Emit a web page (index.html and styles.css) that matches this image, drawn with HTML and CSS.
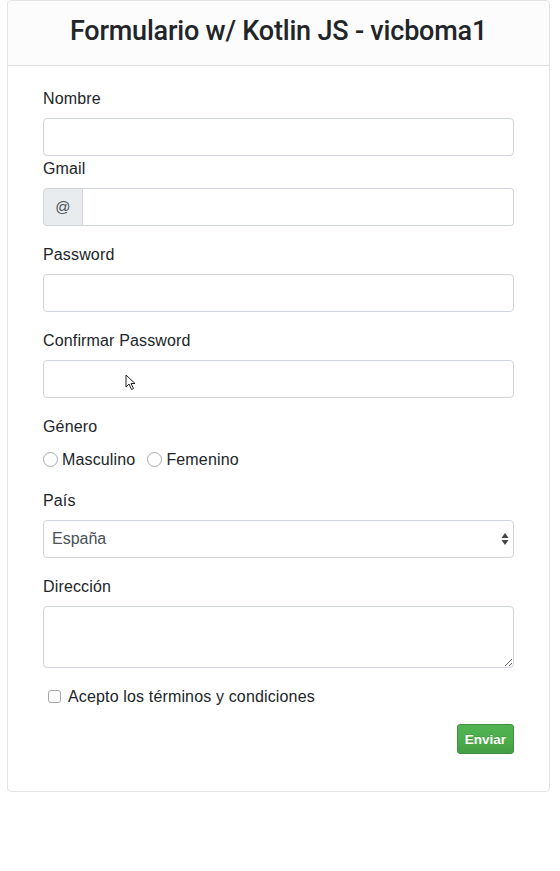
FILE: index.html
```html
<!DOCTYPE html>
<html lang="es">
<head>
<meta charset="utf-8">
<title>Formulario w/ Kotlin JS</title>
<link rel="stylesheet" href="styles.css">
</head>
<body>
<div class="card">
  <div class="card-header">
    <h3 class="title">Formulario w/ Kotlin JS - vicboma1</h3>
  </div>
  <div class="card-body">
    <form class="form">
      <div class="group group-tight">
        <label class="lbl" for="nombre">Nombre</label>
        <input class="control" id="nombre" type="text">
      </div>
      <div class="group">
        <label class="lbl" for="gmail">Gmail</label>
        <div class="input-group">
          <span class="prepend">@</span>
          <input class="control control-group" id="gmail" type="text">
        </div>
      </div>
      <div class="group">
        <label class="lbl" for="pass">Password</label>
        <input class="control" id="pass" type="password">
      </div>
      <div class="group">
        <label class="lbl" for="pass2">Confirmar Password</label>
        <div class="cursor-wrap">
          <input class="control" id="pass2" type="password">
          <svg class="cursor" width="12" height="17" viewBox="0 0 12 17"><path d="M1 1 L1 13 L4 10 L6.5 15.5 L8.5 14.5 L6 9.5 L10 9.5 Z" fill="#fff" stroke="#222" stroke-width="1"/></svg>
        </div>
      </div>
      <div class="group">
        <span class="lbl">Género</span>
        <div class="radios">
          <label class="radio"><input type="radio" name="genero"><span>Masculino</span></label>
          <label class="radio"><input type="radio" name="genero"><span>Femenino</span></label>
        </div>
      </div>
      <div class="group">
        <label class="lbl" for="pais">País</label>
        <div class="select-wrap">
          <select class="control select" id="pais">
            <option>España</option>
          </select>
          <svg class="select-arrows" width="8" height="14" viewBox="0 0 8 14"><path d="M4 1 L7.5 6 L0.5 6 Z M4 13 L7.5 8 L0.5 8 Z" fill="#444"/></svg>
        </div>
      </div>
      <div class="group">
        <label class="lbl" for="dir">Dirección</label>
        <textarea class="control textarea" id="dir" rows="2"></textarea>
      </div>
      <div class="group">
        <label class="check"><input type="checkbox"><span>Acepto los términos y condiciones</span></label>
      </div>
      <div class="group actions">
        <button class="btn" type="button">Enviar</button>
      </div>
    </form>
  </div>
</div>
</body>
</html>
```

FILE: styles.css
```css
* { box-sizing: border-box; }
html, body {
  margin: 0;
  padding: 0;
  background: #fff;
}
body {
  font-family: "Liberation Sans", Arial, Helvetica, sans-serif;
  font-size: 16px;
  line-height: 24px;
  color: #212529;
  letter-spacing: 0.15px;
}
.card {
  margin-left: 7px;
  width: 543px;
  border: 1px solid #e3e3e3;
  border-radius: 4px;
  background: #fff;
}
.card-header {
  height: 65px;
  border-bottom: 1px solid #e0e0e0;
  background: #fcfcfc;
  display: flex;
  align-items: center;
  justify-content: center;
  border-radius: 4px 4px 0 0;
}
.title {
  margin: 0;
  font-family: Roboto, "Liberation Sans", Arial, sans-serif;
  font-size: 27px;
  font-weight: 500;
  line-height: 34px;
  letter-spacing: -0.2px;
  color: #212529;
  padding-bottom: 4px;
}
.card-body {
  padding: 20px 20px 21px;
}
.form {
  padding: 0 15px;
  display: flex;
  flex-direction: column;
}
.group {
  margin-bottom: 16px;
}
.group-tight {
  margin-bottom: 0;
}
.lbl {
  display: block;
  margin-bottom: 8px;
  padding-top: 2px;
  line-height: 22px;
}
.control {
  display: block;
  width: 100%;
  height: 38px;
  padding: 6px 12px;
  font-family: inherit;
  font-size: 16px;
  line-height: 24px;
  color: #495057;
  background: #fff;
  border: 1px solid #ced4da;
  border-radius: 4px;
  outline: none;
}
.input-group {
  display: flex;
}
.prepend {
  width: 40px;
  height: 38px;
  display: flex;
  align-items: center;
  justify-content: center;
  background: #e9ecef;
  border: 1px solid #ced4da;
  border-radius: 4px 0 0 4px;
  color: #495057;
  font-size: 15px;
}
.control-group {
  flex: 1;
  width: auto;
  border-left: 0;
  border-radius: 0 4px 4px 0;
}
.cursor-wrap {
  position: relative;
}
.cursor {
  position: absolute;
  left: 82px;
  top: 14px;
}
.radios {
  display: flex;
  align-items: center;
  height: 26px;
  padding-top: 1px;
}
.radio {
  display: inline-flex;
  align-items: center;
  margin-right: 12px;
}
.radio input {
  appearance: none;
  -webkit-appearance: none;
  width: 15px;
  height: 15px;
  margin: 0 4px 0 0;
  border: 1px solid #a8a8a8;
  border-radius: 50%;
  background: #fff;
}
.select-wrap {
  position: relative;
}
.select {
  appearance: none;
  -webkit-appearance: none;
  padding-left: 8px;
  color: #495057;
}
.select-arrows {
  position: absolute;
  right: 5px;
  top: 12px;
}
.textarea {
  height: 62px;
  resize: vertical;
}
.check {
  display: flex;
  align-items: center;
  height: 24px;
  padding-left: 5px;
  padding-top: 1px;
}
.check input {
  appearance: none;
  -webkit-appearance: none;
  width: 13px;
  height: 13px;
  margin: 0 7px 0 0;
  border: 1px solid #a8a8a8;
  border-radius: 3px;
  background: #fff;
}
.actions {
  display: flex;
  justify-content: flex-end;
}
.btn {
  height: 30px;
  padding: 0 7px;
  font-family: inherit;
  font-size: 13.5px;
  font-weight: bold;
  letter-spacing: 0;
  color: #fff;
  background: linear-gradient(#52b352 0%, #4cae4c 50%, #449d44 100%);
  border: 1px solid #3e8f3e;
  border-radius: 3px;
  text-shadow: 0 -1px 0 rgba(0,0,0,.15);
}
```
